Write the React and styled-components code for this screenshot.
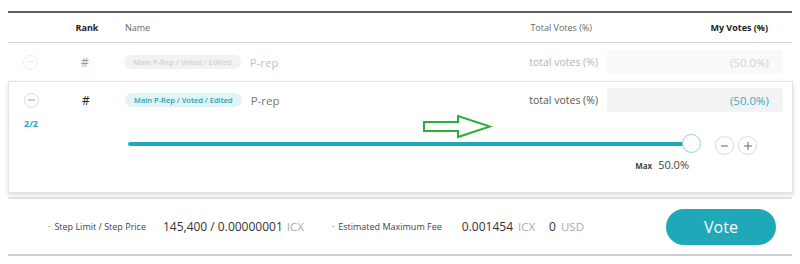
import React from "react";
import styled, { createGlobalStyle } from "styled-components";

const GlobalStyle = createGlobalStyle`
  body {
    margin: 0;
    background: #ffffff;
    font-family: "Open Sans", "Noto Sans", sans-serif;
  }
`;

const teal = "#1fa9b8";

const Page = styled.div`
  width: 784px;
  padding: 11px 8px 0;
`;

const Table = styled.div`
  border-top: 2px solid #5f5f5f;
`;

const Row = styled.div`
  display: grid;
  grid-template-columns: 44px 70px 1fr auto 176px;
  align-items: center;
  height: ${(p) => p.$height || 38}px;
  padding-right: 9px;
  border-bottom: ${(p) => (p.$line ? "1px solid #d0d0d0" : "none")};
  opacity: ${(p) => (p.$faded ? 0.45 : 1)};
`;

const HeadCell = styled.div`
  font-size: 9px;
  color: ${(p) => (p.$strong ? "#222" : "#666")};
  font-weight: ${(p) => (p.$strong ? 700 : 400)};
  text-align: ${(p) => p.$align || "left"};
  padding-left: ${(p) => p.$pl || 0}px;
  padding-right: ${(p) => p.$pr || 0}px;
`;

const CircleBtn = styled.div`
  width: ${(p) => p.$size || 15}px;
  height: ${(p) => p.$size || 15}px;
  border-radius: 50%;
  border: 1px solid #dcdcdc;
  box-sizing: border-box;
  display: flex;
  align-items: center;
  justify-content: center;
  color: #777;
  justify-self: center;
  background: #fff;
`;

const Rank = styled.div`
  font-size: 12px;
  color: #222;
  text-align: center;
  padding-right: 4px;
`;

const NameCell = styled.div`
  display: flex;
  align-items: center;
  gap: 9px;
  padding-left: 2px;
`;

const Tag = styled.span`
  font-size: 7.5px;
  font-weight: 600;
  padding: 2px 9px;
  border-radius: 8px;
  line-height: 10px;
  background: ${(p) => (p.$muted ? "#e4e4e4" : "#dff4f7")};
  color: ${(p) => (p.$muted ? "#999" : "#2b9fb1")};
`;

const PName = styled.span`
  font-size: 11.5px;
  color: #777;
`;

const TotalVotes = styled.div`
  font-size: 10.5px;
  color: #555;
  padding-right: 9px;
`;

const VoteInput = styled.div`
  height: 24px;
  background: #f3f3f3;
  border-radius: 2px;
  display: flex;
  align-items: center;
  justify-content: flex-end;
  padding-right: 14px;
  font-size: 11.5px;
  color: ${(p) => (p.$muted ? "#999" : "#3aa9c1")};
`;

const Card = styled.div`
  border: 1px solid #e3e3e3;
  box-shadow: 0 2px 5px rgba(0, 0, 0, 0.14);
  width: 785px;
  box-sizing: border-box;
`;

const SliderBlock = styled.div`
  display: flex;
  height: 74px;
  position: relative;
`;

const Counter = styled.div`
  width: 44px;
  text-align: center;
  font-size: 9px;
  font-weight: 700;
  color: #2aa6c0;
  line-height: 12px;
`;

const TrackArea = styled.div`
  margin-left: 75px;
  width: 573px;
  display: flex;
  flex-direction: column;
`;

const TrackWrap = styled.div`
  position: relative;
  height: 19px;
  margin-top: 16px;
`;

const Track = styled.div`
  position: absolute;
  left: 0;
  right: 10px;
  top: 8px;
  height: 4px;
  border-radius: 2px;
  background: ${teal};
`;

const Thumb = styled.div`
  position: absolute;
  right: 0;
  top: 0;
  width: 19px;
  height: 19px;
  border-radius: 50%;
  border: 1px solid #8fd3dc;
  background: #fff;
  box-sizing: border-box;
`;

const MaxLine = styled.div`
  align-self: flex-end;
  padding-right: 12px;
  margin-top: 4px;
  display: flex;
  align-items: baseline;
  gap: 6px;
`;

const MaxLabel = styled.span`
  font-size: 8px;
  font-weight: 700;
  color: #444;
`;

const MaxValue = styled.span`
  font-size: 11px;
  color: #444;
`;

const Controls = styled.div`
  display: flex;
  gap: 4px;
  margin-left: 14px;
  margin-top: 18px;
  align-self: flex-start;
`;

const Annotation = styled.svg`
  position: absolute;
  left: 414px;
  top: -3px;
`;

const Footer = styled.div`
  margin-top: 4px;
  border-top: 2px solid #e2e2e2;
  border-bottom: 2px solid #cfcfcf;
  height: 55px;
  display: flex;
  align-items: center;
  padding-left: 40px;
`;

const Label = styled.span`
  font-size: 9px;
  color: #444;
  margin-left: ${(p) => p.$ml || 0}px;
  &::before {
    content: "·";
    margin-right: 4px;
  }
`;

const Value = styled.span`
  font-size: 12px;
  font-weight: 500;
  color: #333;
  margin-left: ${(p) => p.$ml || 0}px;
`;

const Unit = styled.span`
  font-size: 11.5px;
  color: #aaa;
  margin-left: ${(p) => p.$ml || 4}px;
`;

const VoteButton = styled.button`
  margin-left: auto;
  margin-right: 16px;
  width: 110px;
  height: 36px;
  border: none;
  border-radius: 18px;
  background: ${teal};
  color: #fff;
  font-family: inherit;
  font-size: 16px;
`;

const MinusIcon = ({ color = "#888" }) => (
  <svg width="7" height="2" viewBox="0 0 7 2">
    <line x1="0" y1="1" x2="7" y2="1" stroke={color} strokeWidth="1" />
  </svg>
);

const PlusIcon = () => (
  <svg width="8" height="8" viewBox="0 0 8 8">
    <line x1="0" y1="4" x2="8" y2="4" stroke="#666" strokeWidth="1" />
    <line x1="4" y1="0" x2="4" y2="8" stroke="#666" strokeWidth="1" />
  </svg>
);

const VoteRow = ({ muted }) => (
  <>
    <CircleBtn>
      <MinusIcon color={muted ? "#ccc" : "#999"} />
    </CircleBtn>
    <Rank>#</Rank>
    <NameCell>
      <Tag $muted={muted}>Main P-Rep / Voted / Edited</Tag>
      <PName>P-rep</PName>
    </NameCell>
    <TotalVotes>total votes (%)</TotalVotes>
    <VoteInput $muted={muted}>(50.0%)</VoteInput>
  </>
);

export default function App() {
  return (
    <Page>
      <GlobalStyle />
      <Table>
        <Row $height={29} $line>
          <div />
          <HeadCell $strong $align="center">Rank</HeadCell>
          <HeadCell $pl={3}>Name</HeadCell>
          <HeadCell $align="right" $pr={15}>Total Votes (%)</HeadCell>
          <HeadCell $strong $align="right" $pr={15}>
            My Votes (%)
          </HeadCell>
        </Row>
        <Row $faded>
          <VoteRow muted />
        </Row>
        <Card>
          <Row $height={36}>
            <VoteRow />
          </Row>
          <SliderBlock>
            <Counter>2/2</Counter>
            <TrackArea>
              <TrackWrap>
                <Track />
                <Thumb />
              </TrackWrap>
              <MaxLine>
                <MaxLabel>Max</MaxLabel>
                <MaxValue>50.0%</MaxValue>
              </MaxLine>
            </TrackArea>
            <Controls>
              <CircleBtn $size={19}>
                <MinusIcon color="#666" />
              </CircleBtn>
              <CircleBtn $size={19}>
                <PlusIcon />
              </CircleBtn>
            </Controls>
            <Annotation width="70" height="24" viewBox="0 0 70 24">
              <polygon
                points="9,7 43,7 43,1 75,11.5 43,22 43,16 9,16"
                transform="translate(-8,0)"
                fill="none"
                stroke="#27b13a"
                strokeWidth="2"
                strokeLinejoin="miter"
              />
            </Annotation>
          </SliderBlock>
        </Card>
        <Footer>
          <Label>Step Limit / Step Price</Label>
          <Value $ml={17}>145,400 / 0.00000001</Value>
          <Unit>ICX</Unit>
          <Label $ml={28}>Estimated Maximum Fee</Label>
          <Value $ml={20}>0.001454</Value>
          <Unit $ml={5}>ICX</Unit>
          <Value $ml={14}>0</Value>
          <Unit $ml={5}>USD</Unit>
          <VoteButton>Vote</VoteButton>
        </Footer>
      </Table>
    </Page>
  );
}
